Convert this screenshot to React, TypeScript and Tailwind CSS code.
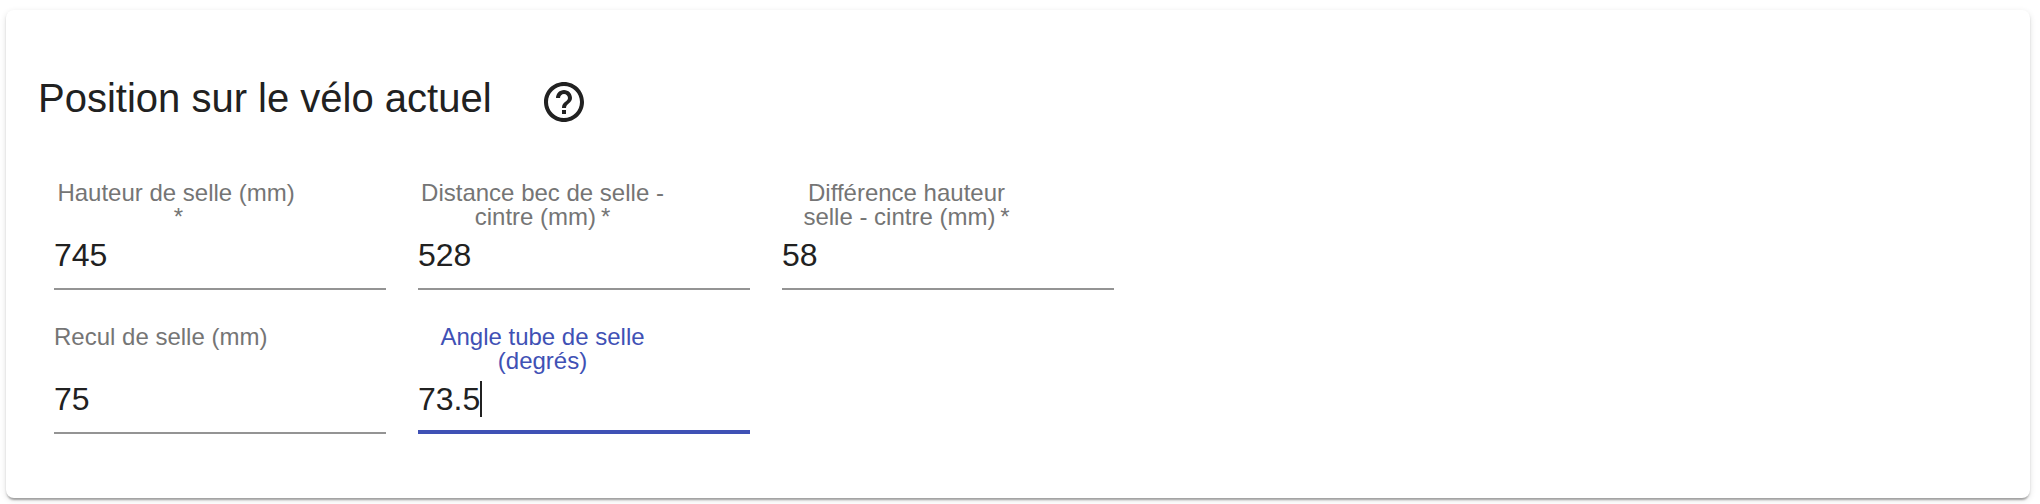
import { useState } from "react";

type Field = { id: string; label: string; value: string; required?: boolean; active?: boolean };

const FIELDS: Field[] = [
  { id: "hauteur-selle", label: "Hauteur de selle (mm)", value: "745", required: true },
  { id: "bec-cintre", label: "Distance bec de selle - cintre (mm)", value: "528", required: true },
  { id: "difference", label: "Différence hauteur selle - cintre (mm)", value: "58", required: true },
  { id: "recul", label: "Recul de selle (mm)", value: "75" },
  { id: "angle", label: "Angle tube de selle (degrés)", value: "73.5", active: true },
];

function HelpIcon() {
  return (
    <svg viewBox="0 0 24 24" className="size-12 fill-current" aria-hidden="true">
      <path d="M11 18h2v-2h-2v2zm1-16C6.48 2 2 6.48 2 12s4.48 10 10 10 10-4.48 10-10S17.52 2 12 2zm0 18c-4.41 0-8-3.59-8-8s3.59-8 8-8 8 3.59 8 8-3.59 8-8 8zm0-14c-2.21 0-4 1.79-4 4h2c0-1.1.9-2 2-2s2 .9 2 2c0 2-3 1.75-3 5h2c0-2.25 3-2.5 3-5 0-2.21-1.79-4-4-4z" />
    </svg>
  );
}

function TextField({ field }: { field: Field }) {
  const [value, setValue] = useState(field.value);
  return (
    <div className="flex flex-col gap-2">
      <div className="min-h-12">
        <label
          htmlFor={field.id}
          className={`block w-fit max-w-3/4 text-center text-[24px] leading-6 ${
            field.active ? "text-[#3f51b5]" : "text-[#757575]"
          }`}
        >
          {field.required ? `${field.label}\u2009*` : field.label}
        </label>
      </div>
      <div className="relative">
        <input
          id={field.id}
          type="text"
          inputMode="decimal"
          required={field.required}
          value={value}
          onChange={(e) => setValue(e.target.value)}
          className={`block h-[53px] w-full bg-transparent text-[32px] leading-9 outline-none ${
            field.active
              ? "border-b-4 border-[#3f51b5] pb-[13px] caret-transparent"
              : "border-b-2 border-[#949494] pb-[15px]"
          }`}
        />
        {field.active && <span className="absolute top-0 left-[62px] h-9 w-0.5 bg-[#212121]" />}
      </div>
    </div>
  );
}

export default function App() {
  return (
    <main className="bg-white pt-2.5 pr-2.5 pb-1.5 pl-1.5 font-['Liberation_Sans',Arial,sans-serif] text-[#212121]">
      <section className="rounded-lg bg-white px-8 pt-[68px] pb-16 shadow-[0_4px_2px_-2px_rgba(0,0,0,0.2),0_2px_2px_0_rgba(0,0,0,0.14),0_2px_6px_0_rgba(0,0,0,0.12)]">
        <header className="flex items-start gap-12">
          <h2 className="text-[40px] leading-10">Position sur le vélo actuel</h2>
          <button type="button" aria-label="Aide">
            <HelpIcon />
          </button>
        </header>
        <form className="mx-4 mt-[55px] grid max-w-[1060px] grid-cols-3 gap-x-8 gap-y-[35px]">
          {FIELDS.map((field) => (
            <TextField key={field.id} field={field} />
          ))}
        </form>
      </section>
    </main>
  );
}
